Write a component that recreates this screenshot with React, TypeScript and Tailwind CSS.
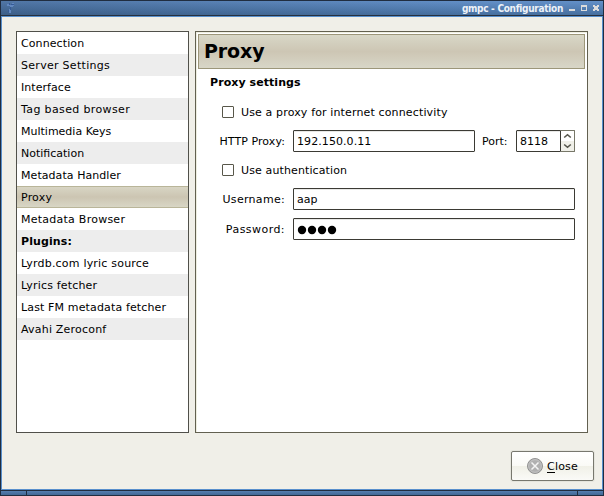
import type { ReactNode } from 'react';

const items = [
  { name: 'Connection', tracking: 'tracking-[0.1px]' },
  { name: 'Server Settings', tracking: 'tracking-[0.29px]' },
  { name: 'Interface', tracking: 'tracking-[0.06px]' },
  { name: 'Tag based browser', tracking: 'tracking-[0.37px]' },
  { name: 'Multimedia Keys', tracking: 'tracking-normal' },
  { name: 'Notification', tracking: 'tracking-normal' },
  { name: 'Metadata Handler', tracking: 'tracking-[0.06px]' },
  { name: 'Proxy', tracking: 'tracking-[0.2px]' },
  { name: 'Metadata Browser', tracking: 'tracking-[0.25px]' },
  { name: 'Plugins:', tracking: 'tracking-[0.1px]' },
  { name: 'Lyrdb.com lyric source', tracking: 'tracking-[0.2px]' },
  { name: 'Lyrics fetcher', tracking: 'tracking-[0.18px]' },
  { name: 'Last FM metadata fetcher', tracking: 'tracking-[0.14px]' },
  { name: 'Avahi Zeroconf', tracking: 'tracking-[0.2px]' },
];

function rowStyle(name: string, index: number) {
  if (name === 'Proxy')
    return 'border-y border-[#b9b599] bg-linear-to-b from-[#d8d5c4] via-[#ccc5b2] to-[#d8d6c5]';
  const weight = name === 'Plugins:' ? 'font-bold ' : '';
  return weight + (index % 2 ? 'bg-[#ededed]' : 'bg-white');
}

function TitleBar() {
  return (
    <div className="flex h-[15px] shrink-0 border-b border-[#26303e] bg-[linear-gradient(to_right,#1b2a4040,#1b2a4000_80%),linear-gradient(to_bottom,#6390c8,#466f9f)] pr-[3px] pl-[5px]">
      <svg width="10" height="12" viewBox="0 0 10 12" className="mt-px shrink-0">
        <path d="M1 2h3v2H1zM6 1h2v3H6zM4 3h3v2H4zM3 7h2v4H3z" fill="#6288bf" />
        <path d="M3 1h1v2H3zM5 2h3v1H5zM4 5h1v3H4zM2 8h1v2H2z" fill="#355a98" />
      </svg>
      <span className="ml-auto pt-px font-['DejaVu_Sans_Condensed','DejaVu_Sans',sans-serif] text-[10px] leading-[13px] font-bold tracking-[-0.3px] whitespace-nowrap text-[#edf2f8]">
        gmpc - Configuration
      </span>
      <svg width="31" height="9" viewBox="0 0 31 9" className="mt-[2px] ml-[6px] shrink-0" shapeRendering="crispEdges">
        <path d="M0 6h6v2H0z" fill="#dcdcdc" />
        <path d="M12 2h6v6h-6z M13 4h4v3h-4z" fill="#dcdcdc" fillRule="evenodd" />
        <path d="M24 2h2v1h2V2h2v2h-1v2h1v2h-2V7h-2v1h-2V6h1V4h-1z" fill="#dcdcdc" />
      </svg>
    </div>
  );
}

function Check({ children, tracking }: { children: ReactNode; tracking: string }) {
  return (
    <label className="flex h-[14px] items-center pl-[8px]">
      <span className="h-[12px] w-[12px] rounded-[1px] border border-[#58574a] bg-white" />
      <span className={'ml-[7px] pt-[2px] whitespace-nowrap ' + tracking}>{children}</span>
    </label>
  );
}

function Label({ children, tracking = '' }: { children: ReactNode; tracking?: string }) {
  return <span className={'flex w-[75px] shrink-0 justify-end pt-[2px] whitespace-nowrap ' + tracking}>{children}</span>;
}

const field = 'flex h-[22px] items-center rounded-[1px] border border-[#3b3a34] bg-white pl-[3px] shadow-[inset_0_1px_0_#e8e8e6]';

export default function App() {
  return (
    <div className="flex h-[496px] w-[604px] flex-col overflow-hidden border border-[#202d40] bg-[#f0efe8] font-['DejaVu_Sans',sans-serif] text-[11px] leading-[14px] text-black">
      <TitleBar />
      <div className="flex h-[474px] shrink-0 flex-col border border-[#588fcc] pt-[14px] pl-[14px]">
        <div className="flex h-[402px] shrink-0 gap-[6px]">
          <div className="w-[173px] border border-[#50504a] bg-white">
            {items.map(({ name, tracking }, i) => (
              <div key={name} className={'flex h-[22px] items-center pt-[2px] pl-[4px] whitespace-nowrap ' + tracking + ' ' + rowStyle(name, i)}>
                {name}
              </div>
            ))}
          </div>
          <div className="w-[393px] border border-[#626050] bg-white p-px shadow-[inset_1px_1px_0_#eeeee0]">
            <div className="mt-px ml-px flex h-[35px] w-[387px] items-center border border-[#9c9679] bg-linear-to-b from-[#d8d7c7] via-[#cdc6b4] to-[#d8d6c7] pb-[2px] pl-[5px] text-[19px] leading-[22px] font-bold tracking-[-0.1px]">
              Proxy
            </div>
            <div className="pl-[13px]">
              <div className="mt-[7px] font-bold tracking-[0.07px]">Proxy settings</div>
              <div className="mt-[15px] pl-[4px]">
                <Check tracking="tracking-[0.14px]">Use a proxy for internet connectivity</Check>
              </div>
              <div className="mt-[11px] flex items-center">
                <Label tracking="tracking-[0.08px]">HTTP Proxy:</Label>
                <div className={field + ' ml-[8px] w-[182px] pt-[2px] tracking-[0.08px]'}>192.150.0.11</div>
                <span className="ml-[7px] w-[34px] pt-[2px] whitespace-nowrap">Port:</span>
                <div className={field + ' w-[45px] rounded-r-none pt-[2px]'}>8118</div>
                <div className="flex h-[22px] w-[14px] flex-col rounded-r-[1px] border border-l-0 border-[#777768] bg-linear-to-b from-white from-50% to-[#f0f0e9] to-50%">
                  <svg width="13" height="20" viewBox="0 0 13 20" fill="none" stroke="#55554c" strokeWidth="1.6" className="shrink-0">
                    <path d="M3.2 6.5 6.5 3.7l3.3 2.8M3.2 13.5l3.3 2.8 3.3-2.8" />
                  </svg>
                </div>
              </div>
              <div className="mt-[11px] pl-[4px]">
                <Check tracking="tracking-[0.12px]">Use authentication</Check>
              </div>
              <div className="mt-[11px] flex items-center">
                <Label tracking="tracking-[0.3px]">Username:</Label>
                <div className={field + ' ml-[8px] w-[282px] pt-[2px]'}>aap</div>
              </div>
              <div className="mt-[8px] flex items-center">
                <Label tracking="tracking-[0.45px]">Password:</Label>
                <div className={field + ' ml-[8px] w-[282px]'}>
                  <svg width="42" height="20" viewBox="0 0 42 20" className="shrink-0">
                    {[0, 1, 2, 3].map((n) => (
                      <circle key={n} cx={5 + n * 10} cy="11" r="4.2" />
                    ))}
                  </svg>
                </div>
              </div>
            </div>
          </div>
        </div>
        <button className="mt-[18px] mr-[8px] flex h-[30px] w-[83px] shrink-0 items-center self-end rounded-[2px] border border-[#77776e] bg-[linear-gradient(to_bottom,#ffffff,#fafaf6_50%,#f0f0e7_50%,#fafaf7)] pl-[15px] shadow-[0_0_0_1px_#e5e5dd]">
          <svg width="16" height="16" viewBox="0 0 16 16">
            <circle cx="8" cy="8" r="7.5" fill="#b0b0b0" stroke="#929292" />
            <circle cx="8" cy="8" r="6.3" fill="none" stroke="#c4c4c4" />
            <path d="m4.5 4.5 7 7m0-7-7 7" stroke="#f4f4f4" strokeWidth="1.5" />
          </svg>
          <span className="ml-[4px] flex pt-[2px] tracking-[0.2px]">
            <span className="h-[13px] border-b border-black leading-[14px]">C</span>lose
          </span>
        </button>
      </div>
      <div className="flex h-[5px] shrink-0 border-t border-[#202d40] bg-linear-to-b from-[#557eaf] to-[#426895]">
        <div className="w-[26px] border-r border-[#202d40]" />
        <div className="flex-1" />
        <div className="w-[26px] border-l border-[#202d40]" />
      </div>
    </div>
  );
}
